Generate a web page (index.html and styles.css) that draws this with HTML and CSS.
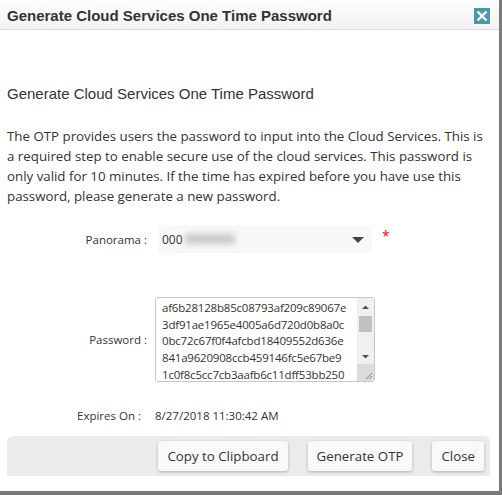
FILE: index.html
```html
<!DOCTYPE html>
<html>
<head>
<meta charset="utf-8">
<link rel="stylesheet" href="styles.css">
</head>
<body>
<div class="frame">
  <div class="dialog">
    <div class="titlebar">
      <span class="title">Generate Cloud Services One Time Password</span>
      <span class="close-x"><svg width="16" height="16" viewBox="0 0 16 16"><path d="M3.5 3.5 L12.5 12.5 M12.5 3.5 L3.5 12.5" stroke="#fff" stroke-width="2.4" fill="none"/></svg></span>
    </div>
    <div class="content">
      <h2 class="subtitle">Generate Cloud Services One Time Password</h2>
      <p class="desc">The OTP provides users the password to input into the Cloud Services. This is a required step to enable secure use of the cloud services. This password is only valid for 10 minutes. If the time has expired before you have use this password, please generate a new password.</p>
      <div class="row row-panorama">
        <label class="lbl">Panorama :</label>
        <div class="select">
          <span class="sel-text">000</span><span class="blur"></span>
          <svg class="caret" width="12" height="7" viewBox="0 0 12 7"><path d="M0 0 H12 L6 6 Z" fill="#444"/></svg>
        </div>
        <span class="req">*</span>
      </div>
      <div class="row row-password">
        <label class="lbl">Password :</label>
        <div class="textarea">
          <div class="ta-text">af6b28128b85c08793af209c89067e<br>3df91ae1965e4005a6d720d0b8a0c<br>0bc72c67f0f4afcbd18409552d636e<br>841a9620908ccb459146fc5e67be9<br>1c0f8c5cc7cb3aafb6c11dff53bb250</div>
          <div class="scroll">
            <div class="sb-track">
              <svg class="arr" width="17" height="14" viewBox="0 0 17 14"><path d="M5 9 H12 L8.5 5.5 Z" fill="#505050"/></svg>
              <div class="thumb"></div>
              <div class="sb-fill"></div>
              <svg class="arr" width="17" height="14" viewBox="0 0 17 14"><path d="M5 5 H12 L8.5 8.5 Z" fill="#505050"/></svg>
            </div>
            <div class="grip"><svg width="17" height="17" viewBox="0 0 17 17"><path d="M15 9 L9 15 M15 12 L12 15" stroke="#888" stroke-width="1" fill="none"/></svg></div>
          </div>
        </div>
      </div>
      <div class="row row-expires">
        <label class="lbl lbl-exp">Expires On :</label>
        <span class="val">8/27/2018 11:30:42 AM</span>
      </div>
    </div>
    <div class="footer">
      <button class="btn">Copy to Clipboard</button>
      <button class="btn">Generate OTP</button>
      <button class="btn">Close</button>
    </div>
  </div>
</div>
</body>
</html>
```
FILE: styles.css
```css
html, body {
  margin: 0;
  padding: 0;
  background: #7a7a7a;
}
.frame {
  width: 502px;
  height: 495px;
  background: #7a7a7a;
}
.dialog {
  width: 499px;
  height: 491px;
  background: #fff;
  display: flex;
  flex-direction: column;
  font-family: "Open Sans", sans-serif;
  color: #333;
}
.titlebar {
  height: 29px;
  border-bottom: 1px solid #dedede;
  background: linear-gradient(#fdfdfd, #f3f3f3);
  display: flex;
  align-items: center;
  justify-content: space-between;
  padding: 0 9px 0 7px;
}
.title {
  font-family: "Liberation Sans", Arial, sans-serif;
  font-weight: bold;
  font-size: 15px;
  color: #333;
  padding-top: 2px;
}
.close-x {
  width: 16px;
  height: 16px;
  background: #4b98ae;
  display: block;
  margin-top: 3px;
}
.close-x svg { display: block; }
.content {
  flex: 1;
  padding: 0 7px;
}
.subtitle {
  font-family: "Liberation Sans", Arial, sans-serif;
  font-weight: normal;
  font-size: 15px;
  color: #333;
  margin: 55px 0 0;
  line-height: 18px;
}
.desc {
  font-size: 13.3px;
  line-height: 20px;
  margin: 23px 0 0;
  color: #333;
}
.row {
  display: flex;
  align-items: center;
}
.lbl {
  width: 140px;
  text-align: right;
  font-size: 11.5px;
  color: #333;
  flex: none;
}
.row-panorama {
  margin-top: 19px;
}
.select {
  margin-left: 11px;
  width: 214px;
  height: 28px;
  border-radius: 4px;
  background: #f8f8f8;
  display: flex;
  align-items: center;
  padding-left: 4px;
  box-sizing: border-box;
  position: relative;
  font-size: 12px;
}
.sel-text { color: #333; }
.blur {
  width: 50px;
  height: 10px;
  background: #c9c9c9;
  filter: blur(3px);
  margin-left: 2px;
}
.caret {
  margin-left: auto;
  margin-right: 8px;
  margin-top: 3px;
}
.req {
  color: #f00;
  font-size: 14px;
  margin-left: 10px;
  margin-top: -8px;
}
.row-password {
  margin-top: 44px;
}
.textarea {
  margin-left: 8px;
  width: 220px;
  height: 85px;
  border: 1px solid #c8c8c8;
  border-radius: 3px;
  box-sizing: border-box;
  display: flex;
  overflow: hidden;
}
.ta-text {
  flex: 1;
  font-size: 11.5px;
  letter-spacing: -0.2px;
  line-height: 16.7px;
  padding: 2px 0 0 6px;
  color: #333;
  white-space: nowrap;
  overflow: hidden;
}
.scroll {
  width: 17px;
  display: flex;
  flex-direction: column;
  background: #f0f0f0;
}
.sb-track {
  flex: 1;
  display: flex;
  flex-direction: column;
  padding-top: 2px;
}
.arr { display: block; }
.thumb {
  width: 13px;
  height: 16px;
  margin: 2px 2px 0;
  background: #c1c1c1;
}
.sb-fill { flex: 1; }
.grip {
  height: 17px;
  background: #dcdcdc;
}
.grip svg { display: block; }
.row-expires {
  margin-top: 26px;
}
.lbl-exp {
  width: 134px;
}
.val {
  margin-left: 14px;
  font-size: 11.5px;
}
.footer {
  margin: 0 9px 15px 7px;
  height: 40px;
  background: #ebebeb;
  border-radius: 6px 6px 0 0;
  display: flex;
  align-items: center;
  justify-content: flex-end;
  gap: 20px;
  padding-right: 6px;
}
.btn {
  font-family: "Open Sans", sans-serif;
  font-size: 13.3px;
  color: #333;
  background: #f9f9f9;
  border: none;
  border-radius: 3px;
  height: 30px;
  padding: 0 9px;
  box-shadow: 0 1px 3px rgba(0,0,0,0.25);
}
```
